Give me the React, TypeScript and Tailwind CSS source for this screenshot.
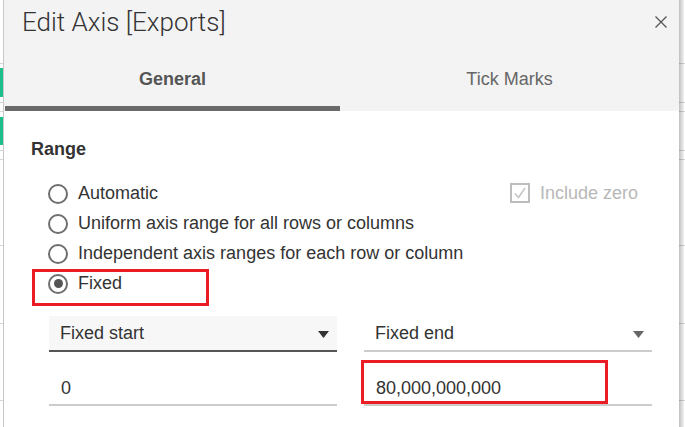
import React from "react";

function Strip({ green, width }: { green?: boolean; width: string }) {
  const line = "border-b border-[#d6d6d6]";
  return (
    <div className={`flex flex-col ${width} shrink-0`}>
      <div className={`h-[64px] ${line}`} />
      <div className={`h-[39px] ${line} pt-[4px]`}>
        {green && <div className="h-[29px] bg-[#1ebe8c]" />}
      </div>
      <div className={`h-[9px] ${line}`} />
      <div className={`h-[39px] ${line} pt-[5px]`}>
        {green && <div className="h-[28px] bg-[#1ebe8c]" />}
      </div>
      <div className={`h-[9px] ${line}`} />
      <div className={`h-[86px] ${line}`} />
      <div className={`h-[78px] ${line}`} />
      <div className={`h-[77px] ${line}`} />
      <div className="flex-1" />
    </div>
  );
}

function Radio({ checked }: { checked?: boolean }) {
  return (
    <div className="mt-[1px] flex h-[20px] w-[20px] shrink-0 items-center justify-center rounded-full border-2 border-[#6e6e6e] bg-white">
      {checked && <div className="h-[9px] w-[9px] rounded-full bg-[#555555]" />}
    </div>
  );
}

function RadioRow({ label, checked, children }: { label: string; checked?: boolean; children?: React.ReactNode }) {
  return (
    <div className="relative flex h-[30px] items-center pl-[17px]">
      <Radio checked={checked} />
      <span className="ml-[10px] leading-[20px] text-[#333333]">{label}</span>
      {children}
    </div>
  );
}

function Triangle({ color }: { color: string }) {
  return (
    <svg width="11" height="7" viewBox="0 0 11 7" className="mt-[3px]">
      <polygon points="0,0 11,0 5.5,7" fill={color} />
    </svg>
  );
}

export default function App() {
  return (
    <div
      className="flex h-[427px] w-[685px] overflow-hidden bg-white text-[18px]"
      style={{ fontFamily: '"Liberation Sans", Arial, sans-serif' }}
    >
      <Strip green width="w-[3px]" />
      <div className="flex flex-1 flex-col border-l border-[#c8c8c8] bg-white">
        {/* Header */}
        <div className="bg-[#f3f3f3]">
          <div className="flex h-[52px] items-start justify-between">
            <div
              className="pl-[18px] pt-[9px] text-[26px] font-light leading-[26px] text-[#333333]"
              style={{ fontFamily: "Roboto, sans-serif" }}
            >
              Edit Axis [Exports]
            </div>
            <svg width="12" height="12" viewBox="0 0 12 12" className="mr-[12px] mt-[16px]">
              <path d="M0.5 0.5L11.5 11.5M11.5 0.5L0.5 11.5" stroke="#555555" strokeWidth="1.3" />
            </svg>
          </div>
          <div className="flex h-[59px] pl-[1px]">
            <div className="flex w-[335px] items-center justify-center border-b-[5px] border-[#6a6a6a] font-bold leading-[20px] text-[#555555]">
              General
            </div>
            <div className="flex flex-1 items-center justify-center border-b-[5px] border-transparent leading-[20px] text-[#666666]">
              Tick Marks
            </div>
          </div>
        </div>

        {/* Body */}
        <div className="pl-[27px] pt-[28px]">
          <div className="font-bold leading-[20px] text-[#333333]">Range</div>
          <div className="mt-[19px] flex flex-col">
            <RadioRow label="Automatic">
              <div className="ml-auto mr-[41px] flex items-center">
                <div className="flex h-[20px] w-[20px] items-center justify-center border-2 border-[#bdbdbd]">
                  <svg width="16" height="16" viewBox="0 0 16 16">
                    <path d="M3 8.5L6.5 12.5L13 3" stroke="#c4c4c4" strokeWidth="1.5" fill="none" />
                  </svg>
                </div>
                <span className="ml-[10px] leading-[20px] text-[#b8b8b8]">Include zero</span>
              </div>
            </RadioRow>
            <RadioRow label="Uniform axis range for all rows or columns" />
            <RadioRow label="Independent axis ranges for each row or column" />
            <RadioRow label="Fixed" checked>
              <div className="absolute left-[1px] top-[1px] h-[37px] w-[177px] border-[3px] border-[#ec1c24]" />
            </RadioRow>
          </div>
        </div>

        <div className="mt-[18px] flex gap-[27px] pl-[45px] pr-[27px]">
          <div className="flex flex-1 flex-col">
            <div className="flex h-[36px] items-center justify-between border-b-2 border-[#555555] bg-[#f7f7f7] pl-[11px] pr-[8px]">
              <span className="leading-[20px] text-[#333333]">Fixed start</span>
              <Triangle color="#333333" />
            </div>
            <div className="flex h-[54px] items-end border-b-2 border-[#cccccc] pb-[6px] pl-[12px]">
              <span className="leading-[20px] text-[#333333]">0</span>
            </div>
          </div>
          <div className="flex flex-1 flex-col">
            <div className="flex h-[36px] items-center justify-between border-b-2 border-[#cccccc] bg-white pl-[11px] pr-[8px]">
              <span className="leading-[20px] text-[#333333]">Fixed end</span>
              <Triangle color="#666666" />
            </div>
            <div className="relative flex h-[54px] items-end border-b-2 border-[#cccccc] pb-[6px] pl-[12px]">
              <span className="leading-[20px] text-[#333333]">80,000,000,000</span>
              <div className="absolute left-[-3px] top-[8px] h-[44px] w-[247px] border-[3px] border-[#ec1c24]" />
            </div>
          </div>
        </div>
      </div>
      <div className="relative flex w-[6px] shrink-0">
        <Strip width="w-[6px]" />
        <div className="absolute inset-y-0 left-0 w-[5px] bg-linear-to-r from-black/25 to-black/5" />
      </div>
    </div>
  );
}
